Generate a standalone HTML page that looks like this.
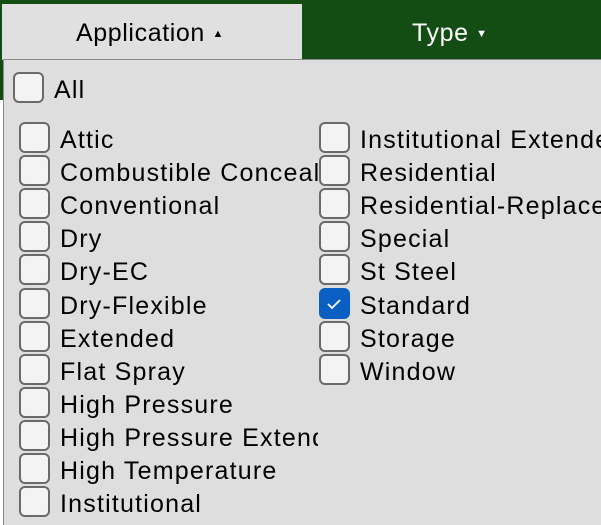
<!DOCTYPE html><html><head><style>
html{overflow:hidden;width:601px;height:525px}
body{margin:0;width:601px;height:525px;overflow:hidden;background:#134d14;position:relative;font-family:"Liberation Sans",sans-serif;}
.tab{position:absolute;left:2px;top:4px;width:300px;height:56px;background:#e0e0e0;}
.t{position:absolute;top:18px;font-size:25px;line-height:30px;white-space:nowrap;letter-spacing:0.6px}
.panel{position:absolute;left:3px;top:59px;width:598px;height:466px;background:#dedede;border-top:1px solid #8a8a8a;border-left:1px solid #8a8a8a;box-sizing:border-box}
.cb{position:absolute;border:2px solid #6a6a6a;border-radius:6px;background:#f3f3f3;box-sizing:border-box;width:31px;height:31px}
.l{position:absolute;font-size:25px;line-height:30px;color:#000;white-space:nowrap;letter-spacing:1.2px;overflow:hidden}
.chk{background:#0a5fc2;border-color:#0a5fc2}
.side{position:absolute;left:0;width:3px;background:#fff}
</style></head><body>
<div class="side" style="top:100px;height:425px;background:#fff"></div>
<div class="tab"></div>
<div class="t" style="left:76px;color:#000">Application <span style="font-size:11px;vertical-align:4px">▲</span></div>
<div class="t" style="left:412px;color:#fff">Type <span style="font-size:11px;vertical-align:4px">▼</span></div>
<div class="panel"></div>
<div class="cb" style="left:13px;top:72px"></div><div class="l" style="left:54px;top:75px">All</div>
<div id="c"></div>
<script>
var a=["Attic","Combustible Conceal","Conventional","Dry","Dry-EC","Dry-Flexible","Extended","Flat Spray","High Pressure","High Pressure Extend","High Temperature","Institutional"];
var b=["Institutional Extended","Residential","Residential-Replacement","Special","St Steel","Standard","Storage","Window"];
var h="";
a.forEach(function(s,i){var y=122+i*33.1;h+='<div class="cb" style="left:19px;top:'+y+'px"></div><div class="l" style="left:60px;top:'+(y+3)+'px;width:258px">'+s+'</div>';});
b.forEach(function(s,i){var y=122+i*33.1;var c=s=="Standard";h+='<div class="cb'+(c?' chk':'')+'" style="left:319px;top:'+y+'px">'+(c?'<svg width="28" height="28" style="position:absolute;left:0;top:0"><path d="M7 14l4 4 8-8" stroke="#fff" stroke-width="1.8" fill="none"/></svg>':'')+'</div><div class="l" style="left:360px;top:'+(y+3)+'px;width:241px">'+s+'</div>';});
document.getElementById("c").innerHTML=h;
</script>
</body></html>
